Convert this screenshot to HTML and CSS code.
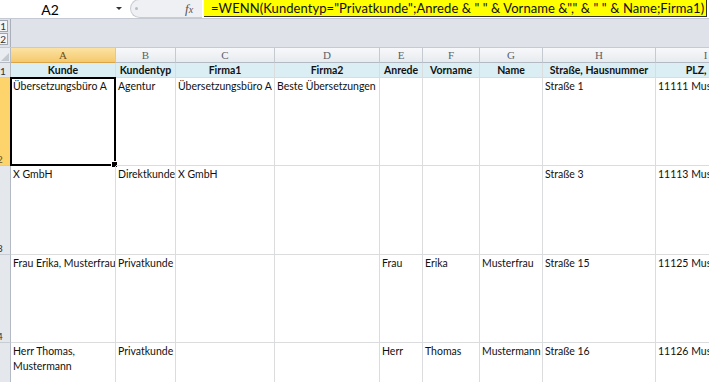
FILE: index.html
```html
<!DOCTYPE html>
<html lang="de">
<head>
<meta charset="utf-8">
<title>Excel</title>
<link rel="stylesheet" href="styles.css">
</head>
<body>
<div class="app">
  <div class="fbar">
    <div class="namebox"><span class="nb-text">A2</span></div>
    <div class="nb-arrow"></div>
    <div class="pill"><span class="pill-dot"></span></div>
    <div class="fx">f<span class="fx-x">x</span></div>
    <div class="formula">=WENN(Kundentyp="Privatkunde";Anrede &amp; " " &amp; Vorname &amp;"," &amp; " " &amp; Name;Firma1)</div>
  </div>
  <div class="outline">
    <div class="ol-btns">
      <div class="ol-btn">1</div>
      <div class="ol-btn">2</div>
    </div>
    <div class="ol-space"></div>
  </div>
  <div class="sheet">
    <div class="corner"><span class="tri"></span></div>
    <div class="ch sel">A</div>
    <div class="ch">B</div>
    <div class="ch">C</div>
    <div class="ch">D</div>
    <div class="ch">E</div>
    <div class="ch">F</div>
    <div class="ch">G</div>
    <div class="ch">H</div>
    <div class="ch">I</div>

    <div class="rh rh-first"><span>1</span></div>
    <div class="c hd">Kunde</div>
    <div class="c hd">Kundentyp</div>
    <div class="c hd">Firma1</div>
    <div class="c hd">Firma2</div>
    <div class="c hd">Anrede</div>
    <div class="c hd">Vorname</div>
    <div class="c hd">Name</div>
    <div class="c hd">Straße, Hausnummer</div>
    <div class="c hd">PLZ, Ort</div>

    <div class="rh rsel"><span>2</span></div>
    <div class="c active">Übersetzungsbüro A<span class="handle"></span></div>
    <div class="c">Agentur</div>
    <div class="c">Übersetzungsbüro A</div>
    <div class="c">Beste Übersetzungen</div>
    <div class="c"></div>
    <div class="c"></div>
    <div class="c"></div>
    <div class="c">Straße 1</div>
    <div class="c">11111 Musterstadt</div>

    <div class="rh"><span>3</span></div>
    <div class="c">X GmbH</div>
    <div class="c">Direktkunde</div>
    <div class="c">X GmbH</div>
    <div class="c"></div>
    <div class="c"></div>
    <div class="c"></div>
    <div class="c"></div>
    <div class="c">Straße 3</div>
    <div class="c">11113 Musterstadt</div>

    <div class="rh"><span>4</span></div>
    <div class="c">Frau Erika, Musterfrau</div>
    <div class="c">Privatkunde</div>
    <div class="c"></div>
    <div class="c"></div>
    <div class="c">Frau</div>
    <div class="c">Erika</div>
    <div class="c">Musterfrau</div>
    <div class="c">Straße 15</div>
    <div class="c">11125 Musterstadt</div>

    <div class="rh"><span>5</span></div>
    <div class="c">Herr Thomas,<br>Mustermann</div>
    <div class="c">Privatkunde</div>
    <div class="c"></div>
    <div class="c"></div>
    <div class="c">Herr</div>
    <div class="c">Thomas</div>
    <div class="c">Mustermann</div>
    <div class="c">Straße 16</div>
    <div class="c">11126 Musterstadt</div>
  </div>
</div>
</body>
</html>
```

FILE: styles.css
```css
html, body {
  margin: 0;
  padding: 0;
  background: #ffffff;
  overflow: hidden;
}
.app {
  width: 709px;
  height: 382px;
  overflow: hidden;
  font-family: "Lato", "Open Sans", sans-serif;
}
.fbar {
  height: 19px;
  display: flex;
  align-items: stretch;
  background: #ffffff;
  border-bottom: 1px solid #c5cad2;
  box-sizing: border-box;
}
.namebox {
  width: 112px;
  display: flex;
  align-items: center;
  justify-content: center;
  font-size: 14px;
  color: #000;
  padding-right: 12px;
  box-sizing: border-box;
}
.nb-arrow {
  width: 0;
  height: 0;
  margin: 7px 0 0 4px;
  border-left: 3px solid transparent;
  border-right: 3px solid transparent;
  border-top: 3px solid #333;
}
.pill {
  margin-left: 8px;
  width: 72px;
  height: 19px;
  margin-top: -1px;
  border: 1px solid #c9cdd3;
  border-right: none;
  border-radius: 10px 0 0 10px;
  background: #eef0f3;
  box-sizing: border-box;
  position: relative;
}
.pill-dot {
  position: absolute;
  left: 4px;
  top: 7px;
  width: 3px;
  height: 3px;
  border-radius: 50%;
  background: #b8bcc4;
}
.fx {
  position: relative;
  z-index: 1;
  margin-left: -17px;
  width: 19px;
  font-family: "Liberation Serif", serif;
  font-style: italic;
  font-size: 13px;
  color: #555;
  line-height: 18px;
}
.fx-x {
  font-size: 10px;
}
.formula {
  width: 503px;
  height: 17px;
  background: #ffff00;
  border-right: 1px solid #333;
  border-bottom: 1px solid #333;
  box-sizing: border-box;
  font-size: 13px;
  letter-spacing: 0.07px;
  line-height: 16px;
  padding-left: 7px;
  white-space: nowrap;
  overflow: hidden;
  color: #111;
}
.outline {
  height: 29px;
  display: flex;
  background: #dfe3e9;
  border-bottom: 1px solid #c6cbd3;
  box-sizing: border-box;
}
.ol-btns {
  width: 11px;
  border-right: 1px solid #a9b0ba;
  display: flex;
  flex-direction: column;
  gap: 1px;
  padding-top: 1px;
  overflow: hidden;
  box-sizing: border-box;
}
.ol-btn {
  flex: none;
  width: 10px;
  height: 12px;
  margin-left: -2px;
  background: #f4f5f7;
  border: 1px solid #9ea6b1;
  font-size: 10px;
  line-height: 10px;
  text-align: right;
  color: #333;
  padding-right: 1px;
  box-sizing: border-box;
}
.sheet {
  display: grid;
  grid-template-columns: 11px 105px 60px 99px 105px 43px 57px 63px 113px 100px;
  grid-template-rows: 15px 15px 88px 89px 88px 88px;
  font-size: 10.5px;
  color: #111;
}
.corner {
  background: #e9ecf0;
  border-right: 1px solid #b3bac4;
  border-bottom: 1px solid #b3bac4;
  position: relative;
}
.tri {
  position: absolute;
  right: 1px;
  bottom: 1px;
  width: 0;
  height: 0;
  border-left: 8px solid transparent;
  border-bottom: 8px solid #c3c8cf;
}
.ch {
  background: linear-gradient(#f7f8fa, #e8ebef);
  border-right: 1px solid #c5cad1;
  border-bottom: 1px solid #b3bac4;
  font-family: "Liberation Serif", serif;
  font-size: 11px;
  color: #5a5f66;
  text-align: center;
  line-height: 14px;
}
.ch.sel {
  background: linear-gradient(#fbe2a3, #f5c96d);
  border-bottom-color: #dca448;
  color: #6b4f1c;
}
.rh {
  background: #e4e7ec;
  border-right: 1px solid #b3bac4;
  border-bottom: 1px solid #c8cdd4;
  font-size: 10px;
  color: #333;
  display: flex;
  align-items: flex-end;
  justify-content: flex-start;
  overflow: hidden;
}
.rh span {
  margin-left: -3px;
  line-height: 12px;
}
.rh.rh-first span {
  margin-left: 0;
}
.rh.rsel {
  background: #fdd36b;
  color: #6b4f1c;
  border-right-color: #dca448;
}
.c {
  border-right: 1px solid #dadcdd;
  border-bottom: 1px solid #dadcdd;
  padding: 1px 2px 0;
  line-height: 15px;
  white-space: nowrap;
  overflow: hidden;
  box-sizing: border-box;
  position: relative;
}
.hd {
  background: #daeef3;
  font-weight: 700;
  text-align: center;
  padding-top: 0;
  line-height: 14px;
}
.active {
  border: 2px solid #000;
  padding: 0 1px;
  margin: -1px 0 0 -1px;
  overflow: visible;
}
.handle {
  position: absolute;
  right: -4px;
  bottom: -4px;
  width: 5px;
  height: 5px;
  background: #000;
  border: 1px solid #fff;
}
```
